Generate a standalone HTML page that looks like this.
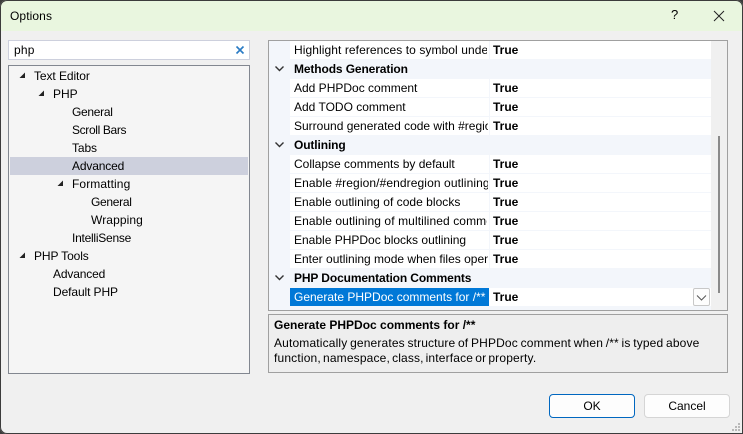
<!DOCTYPE html>
<html lang="en">
<head>
<meta charset="utf-8">
<title>Options</title>
<style>
html,body{margin:0;padding:0;background:#fff}
#w{position:relative;width:743px;height:434px;overflow:hidden;background:#f0f0f0;font:12px/18px "Liberation Sans",sans-serif;color:#000;box-sizing:border-box}
#w div,#w span{position:absolute;white-space:nowrap;box-sizing:border-box}
#w i{font-style:normal;letter-spacing:.12px}
#frame{left:0;top:0;width:743px;height:434px;border:1px solid #3c3c3c;border-radius:7px 7px 0 7px;box-shadow:0 0 0 6px #3c3c3c;z-index:5;pointer-events:none}
#title{left:0;top:0;width:743px;height:31px;background:#e9f6df}
.t{line-height:18px;height:18px}
.row{left:290px;width:421px;height:18px;background:#fff}
.cat{left:269px;width:442px;height:18px;background:#f3f6fb}
.name{left:294px;width:194px;overflow:hidden;height:18px;line-height:18px;letter-spacing:0}
.val{left:493px;font-weight:700;height:18px;line-height:18px}
.hd{left:294px;font-weight:700;height:18px;line-height:18px;letter-spacing:-.12px}
.sep{left:489px;width:1px;height:18px;background:#f3f6fb}
svg{position:absolute;overflow:visible}
</style>
</head>
<body>
<div id="w">
<div id="title"></div>
<div class="t" style="left:10px;top:7px;letter-spacing:.1px">Options</div>
<div class="t" style="left:671px;top:6px;font-size:13px">?</div>
<svg style="left:713px;top:10px" width="12" height="12"><path d="M1 1L11 11M11 1L1 11" stroke="#222" stroke-width="1" fill="none"/></svg>

<!-- search -->
<div style="left:8px;top:40px;width:242px;height:20px;background:#fff;border:1px solid #cdd0dd"></div>
<div class="t" style="left:14px;top:41px;letter-spacing:.2px">php</div>
<svg style="left:236px;top:46px" width="8" height="8"><path d="M.5 .5L7.5 7.5M7.5 .5L.5 7.5" stroke="#2a7bc4" stroke-width="1.6" fill="none"/></svg>

<!-- tree -->
<div style="left:8px;top:65px;width:242px;height:309px;background:#f5f5f5;border:1px solid #828790"></div>
<div style="left:10px;top:157px;width:238px;height:18px;background:#cdd0dd"></div>
<svg style="left:19px;top:72px" width="7" height="7"><path d="M6 .5V6H.5Z" fill="#222"/></svg>
<svg style="left:38px;top:90px" width="7" height="7"><path d="M6 .5V6H.5Z" fill="#222"/></svg>
<svg style="left:57px;top:180px" width="7" height="7"><path d="M6 .5V6H.5Z" fill="#222"/></svg>
<svg style="left:19px;top:252px" width="7" height="7"><path d="M6 .5V6H.5Z" fill="#222"/></svg>
<div class="t" style="left:34px;top:67px;letter-spacing:-.08px">Text Editor</div>
<div class="t" style="left:53px;top:85px">PHP</div>
<div class="t" style="left:72px;top:103px;letter-spacing:-.3px">General</div>
<div class="t" style="left:72px;top:121px;letter-spacing:-.35px">Scroll Bars</div>
<div class="t" style="left:72px;top:139px;letter-spacing:-.1px">Tabs</div>
<div class="t" style="left:72px;top:157px;letter-spacing:-.15px">Advanced</div>
<div class="t" style="left:72px;top:175px;letter-spacing:.1px">Formatting</div>
<div class="t" style="left:91px;top:193px;letter-spacing:-.3px">General</div>
<div class="t" style="left:91px;top:211px;letter-spacing:.1px">Wrapping</div>
<div class="t" style="left:72px;top:229px;letter-spacing:-.25px">IntelliSense</div>
<div class="t" style="left:34px;top:247px;letter-spacing:-.1px">PHP Tools</div>
<div class="t" style="left:53px;top:265px;letter-spacing:-.15px">Advanced</div>
<div class="t" style="left:53px;top:283px;letter-spacing:-.1px">Default PHP</div>

<!-- grid -->
<div style="left:268px;top:40px;width:460px;height:271px;background:#f3f6fb;border:1px solid #a0a0a0"></div>
<div style="left:711px;top:41px;width:16px;height:269px;background:#f0f0f0"></div>
<div style="left:718px;top:136px;width:2px;height:157px;background:#8a8a8a"></div>

<div class="row" style="top:41px"></div>
<div class="row" style="top:79px"></div>
<div class="row" style="top:98px"></div>
<div class="row" style="top:117px"></div>
<div class="row" style="top:155px"></div>
<div class="row" style="top:174px"></div>
<div class="row" style="top:193px"></div>
<div class="row" style="top:212px"></div>
<div class="row" style="top:231px"></div>
<div class="row" style="top:250px"></div>
<div class="row" style="top:288px"></div>
<div class="sep" style="top:41px"></div>
<div class="sep" style="top:79px"></div>
<div class="sep" style="top:98px"></div>
<div class="sep" style="top:117px"></div>
<div class="sep" style="top:155px"></div>
<div class="sep" style="top:174px"></div>
<div class="sep" style="top:193px"></div>
<div class="sep" style="top:212px"></div>
<div class="sep" style="top:231px"></div>
<div class="sep" style="top:250px"></div>

<div class="name" style="top:41px;letter-spacing:.08px;width:193px">Highlight references to symbol under</div><div class="val" style="top:41px">True</div>
<div class="hd" style="top:60px">Methods Generation</div>
<div class="name" style="top:79px">Add PHPDoc comment</div><div class="val" style="top:79px">True</div>
<div class="name" style="top:98px">Add TODO comment</div><div class="val" style="top:98px">True</div>
<div class="name" style="top:117px">Surround generated code with #region</div><div class="val" style="top:117px">True</div>
<div class="hd" style="top:136px">Outlining</div>
<div class="name" style="top:155px">Collapse comments by default</div><div class="val" style="top:155px">True</div>
<div class="name" style="top:174px;letter-spacing:.1px">Enable #region/#endregion outlining</div><div class="val" style="top:174px">True</div>
<div class="name" style="top:193px;letter-spacing:.03px">Enable outlining of code blocks</div><div class="val" style="top:193px">True</div>
<div class="name" style="top:212px;letter-spacing:.1px;width:193px">Enable outlining of multilined comments</div><div class="val" style="top:212px">True</div>
<div class="name" style="top:231px">Enable PHPDoc blocks outlining</div><div class="val" style="top:231px">True</div>
<div class="name" style="top:250px">Enter outlining mode when files open</div><div class="val" style="top:250px">True</div>
<div class="hd" style="top:269px">PHP Documentation Comments</div>
<div style="left:290px;top:288px;width:199px;height:18px;background:#0078d7"></div>
<div class="name" style="top:288px;color:#fff">Generate PHPDoc comments for /**</div><div class="val" style="top:288px">True</div>

<svg style="left:275px;top:66px" width="9" height="6"><path d="M.5 .5L4.5 4.5L8.5 .5" stroke="#333" stroke-width="1.4" fill="none"/></svg>
<svg style="left:275px;top:142px" width="9" height="6"><path d="M.5 .5L4.5 4.5L8.5 .5" stroke="#333" stroke-width="1.4" fill="none"/></svg>
<svg style="left:275px;top:275px" width="9" height="6"><path d="M.5 .5L4.5 4.5L8.5 .5" stroke="#333" stroke-width="1.4" fill="none"/></svg>

<div style="left:693px;top:288px;width:17px;height:18px;background:#fdfdfd;border:1px solid #c8c8c8;border-radius:2px"></div>
<svg style="left:696px;top:295px" width="11" height="6"><path d="M1 .5L5.5 5L10 .5" stroke="#555" stroke-width="1" fill="none"/></svg>

<!-- description -->
<div style="left:268px;top:314px;width:460px;height:59px;background:#eeeeee;border:1px solid #a0a0a0"></div>
<div class="t" style="left:274px;top:316px;font-weight:700">Generate PHPDoc comments for /**</div>
<div class="t" style="left:274px;top:334px;letter-spacing:.155px;word-spacing:-.8px">Automatically generates <i>structure </i>of PHPDoc comment when /** is typed above</div>
<div class="t" style="left:274px;top:349px;letter-spacing:.168px;word-spacing:-1.4px">function, namespace, <i>class, </i>interface or property.</div>

<!-- buttons -->
<div style="left:549px;top:394px;width:86px;height:24px;background:#fdfdfd;border:1px solid #0067c0;border-radius:4px"></div>
<div class="t" style="left:549px;width:86px;text-align:center;top:397px">OK</div>
<div style="left:644px;top:394px;width:86px;height:24px;background:#fdfdfd;border:1px solid #d5d5d5;border-radius:4px"></div>
<div class="t" style="left:644px;width:86px;text-align:center;top:397px">Cancel</div>

<!-- grip -->
<svg style="left:732px;top:423px" width="10" height="10" fill="#b8b8b8"><rect x="6" y="0" width="2" height="2"/><rect x="3" y="3" width="2" height="2"/><rect x="6" y="3" width="2" height="2"/><rect x="0" y="6" width="2" height="2"/><rect x="3" y="6" width="2" height="2"/><rect x="6" y="6" width="2" height="2"/></svg>

<div id="frame"></div>
</div>
</body>
</html>
